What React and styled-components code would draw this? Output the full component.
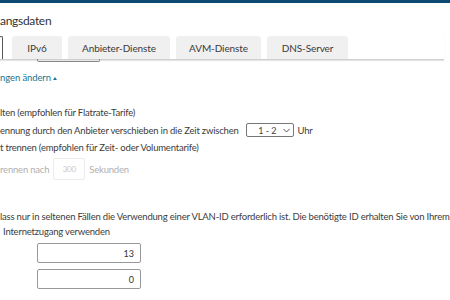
import React from 'react';
import styled, {createGlobalStyle} from 'styled-components';

const Global = createGlobalStyle`
  html, body {
    margin: 0;
    padding: 0;
    background: #fff;
    overflow: hidden;
  }
  body {
    font-family: Lato, "Open Sans", sans-serif;
    color: #3c3c3c;
  }
`;

const Page = styled.div`
  width: 450px;
  height: 300px;
  border-top: 3px solid #0c4a73;
  box-sizing: border-box;
  position: relative;
  overflow: hidden;
`;

const Title = styled.h1`
  margin: 0;
  padding-top: 11px;
  height: 22px;
  font-size: 12px;
  letter-spacing: -0.3px;
  font-weight: 400;
  color: #333;
  line-height: 14px;
`;

const TabBar = styled.div`
  display: flex;
  gap: 6px;
  height: 23px;
  width: 444px;
  border-bottom: 1px solid #cfcfcf;
  box-shadow: 0 1px 1px rgba(0,0,0,.1);
  position: relative;
`;

const Tab = styled.div`
  display: flex;
  align-items: center;
  justify-content: center;
  width: ${({w}) => w}px;
  margin-left: ${({ml}) => ml || 0}px;
  background: ${({active}) => active ? '#fff' : '#f0f0f0'};
  border: ${({active}) => active ? '1px solid #555' : 'none'};
  border-bottom: none;
  border-radius: 3px 3px 0 0;
  font-size: 10px;
  letter-spacing: -0.1px;
  color: #3a3a3a;
  box-sizing: border-box;
`;

const Hanger = styled.div`
  position: absolute;
  left: 37px;
  top: 23px;
  width: 63px;
  height: 3px;
  border: 1px solid #888;
  border-top: none;
  border-radius: 0 0 2px 2px;
  box-sizing: border-box;
`;

const ToggleLink = styled.a`
  display: block;
  margin-top: 12px;
  font-size: 9.5px;
  letter-spacing: -0.1px;
  color: #23758a;
  line-height: 12px;
  &::after {
    content: '';
    display: inline-block;
    margin-left: 2px;
    border-left: 2.5px solid transparent;
    border-right: 2.5px solid transparent;
    border-bottom: 3px solid #23758a;
    vertical-align: 1px;
  }
`;

const Section = styled.div`
  margin-top: ${({mt}) => mt}px;
  display: flex;
  flex-direction: column;
`;

const Row = styled.div`
  display: flex;
  align-items: center;
  height: ${({h}) => h || 17}px;
  font-size: 9.5px;
  letter-spacing: -0.2px;
  white-space: nowrap;
  gap: 4px;
  padding-left: ${({pl}) => pl || 0}px;
  color: ${({disabled}) => disabled ? '#b0b0b0' : '#3c3c3c'};
`;

const Select = styled.div`
  width: 48px;
  height: 14px;
  margin-left: 3px;
  border: 1px solid #777;
  border-radius: 2px;
  box-sizing: border-box;
  display: flex;
  align-items: center;
  justify-content: flex-end;
  padding-right: 3px;
  gap: 6px;
  font-size: 9px;
  letter-spacing: 0;
  color: #444;
`;

const SmallInput = styled.div`
  width: 32px;
  height: 22px;
  border: 1px solid #ececec;
  border-radius: 2px;
  box-sizing: border-box;
  display: flex;
  align-items: center;
  justify-content: center;
  font-size: 8px;
  color: #c8c8c8;
`;

const Field = styled.div`
  width: 104px;
  height: 20px;
  margin-left: 37px;
  margin-top: ${({mt}) => mt}px;
  border: 1px solid #999;
  border-radius: 2px;
  box-sizing: border-box;
  display: flex;
  align-items: center;
  justify-content: flex-end;
  padding-right: 6px;
  font-size: 9px;
  color: #333;
`;

const Chevron = () => (
  <svg width="7" height="5" viewBox="0 0 7 5">
    <path d="M0.5 1 L3.5 4 L6.5 1" fill="none" stroke="#555" strokeWidth="1" />
  </svg>
);

export default function App() {
  return (
    <>
      <Global />
      <Page>
        <Title>angsdaten</Title>
        <TabBar>
          <Tab active w={4} ml={-1} />
          <Tab w={50} ml={3}>IPv6</Tab>
          <Tab w={102}>Anbieter-Dienste</Tab>
          <Tab w={85}>AVM-Dienste</Tab>
          <Tab w={81}>DNS-Server</Tab>
          <Hanger />
        </TabBar>
        <ToggleLink>ngen ändern</ToggleLink>
        <Section mt={20}>
          <Row>lten (empfohlen für Flatrate-Tarife)</Row>
          <Row h={18}>
            ennung durch den Anbieter verschieben in die Zeit zwischen
            <Select>1 - 2 <Chevron /></Select>
            <span>Uhr</span>
          </Row>
          <Row>t trennen (empfohlen für Zeit- oder Volumentarife)</Row>
          <Row h={26} disabled>
            rennen nach
            <SmallInput>300</SmallInput>
            Sekunden
          </Row>
        </Section>
        <Section mt={27}>
          <Row h={14}>lass nur in seltenen Fällen die Verwendung einer VLAN-ID erforderlich ist. Die benötigte ID erhalten Sie von Ihrem</Row>
          <Row pl={3}>Internetzugang verwenden</Row>
        </Section>
        <Field mt={3}>13</Field>
        <Field mt={6}>0</Field>
      </Page>
    </>
  );
}
